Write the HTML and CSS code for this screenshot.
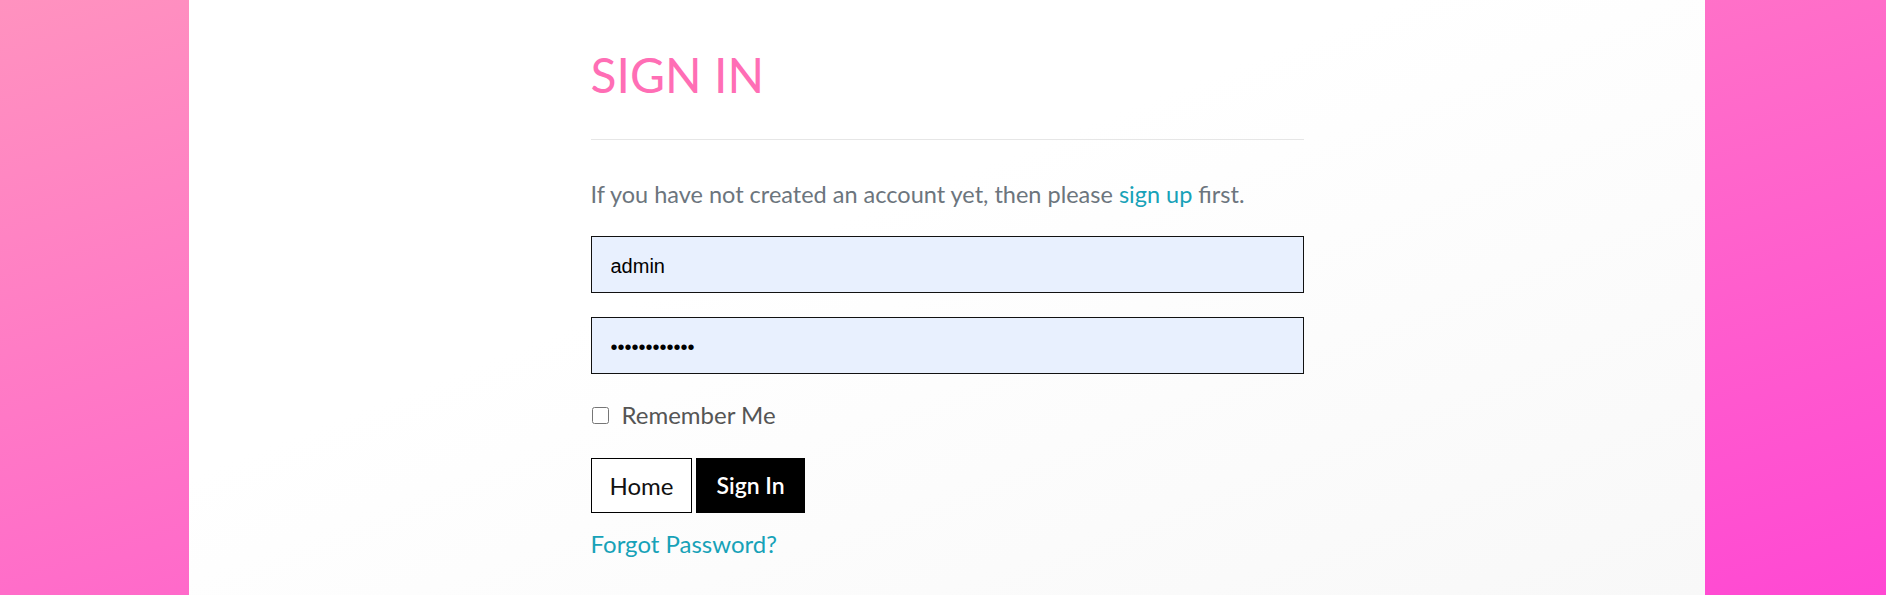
FILE: index.html
```html
<!DOCTYPE html>
<html lang="en">
<head>
<meta charset="utf-8">
<title>Sign In</title>
<link rel="stylesheet" href="styles.css">
</head>
<body>
<div class="page">
  <main class="panel">
    <div class="content">
      <h1 class="title">SIGN IN</h1>
      <hr class="rule">
      <p class="intro">If you have not created an account yet, then please <a href="#" class="link">sign up</a> first.</p>
      <form class="form">
        <input class="field" type="text" value="admin">
        <input class="field" type="password" value="adminadmin12">
        <label class="remember"><input type="checkbox" class="check"><span>Remember Me</span></label>
        <div class="actions">
          <a href="#" class="btn btn-outline">Home</a>
          <button type="button" class="btn btn-dark">Sign In</button>
        </div>
        <a href="#" class="link forgot">Forgot Password?</a>
      </form>
    </div>
  </main>
</div>
</body>
</html>
```
FILE: styles.css
```css
html, body {
  margin: 0;
  padding: 0;
  height: 100%;
}
body {
  font-family: Lato, "Liberation Sans", sans-serif;
  background: linear-gradient(to bottom right, #ff92bf, #ff48d3);
  overflow: hidden;
}
.page {
  height: 595px;
  display: flex;
}
.panel {
  margin-left: 189px;
  width: 1516px;
  height: 595px;
  background: linear-gradient(to bottom right, #ffffff 40%, #f8f8f8);
}
.content {
  width: 713px;
  margin: 0 auto;
  padding-top: 46px;
}
.title {
  margin: 0;
  font-size: 48px;
  font-weight: 400;
  line-height: 1.2;
  color: #ff6eb5;
}
.rule {
  margin: 35px 0 0;
  border: 0;
  border-top: 1px solid #e6e6e6;
  height: 0;
}
.intro {
  margin: 37px 0 0;
  font-size: 23.5px;
  line-height: 35px;
  color: #6c757d;
}
.link {
  color: #17a2b8;
  text-decoration: none;
}
.form {
  display: flex;
  flex-direction: column;
  align-items: flex-start;
}
.field {
  box-sizing: border-box;
  width: 100%;
  height: 57px;
  margin: 24px 0 0;
  padding: 4px 19px 0;
  border: 1px solid #111;
  border-radius: 0;
  background: #e8f0fe;
  font-family: "Liberation Sans", Arial, sans-serif;
  font-size: 20px;
  color: #000;
  outline: none;
}
.field + .field {
  margin-top: 24px;
}
.remember {
  display: flex;
  align-items: flex-start;
  margin-top: 23px;
  font-size: 24px;
  line-height: 36px;
  color: #555;
}
.check {
  width: 17px;
  height: 17px;
  margin: 10px 13px 0 1px;
}
.actions {
  display: flex;
  gap: 4px;
  margin-top: 25px;
}
.btn {
  box-sizing: border-box;
  height: 55px;
  padding: 0 18px;
  display: flex;
  align-items: center;
  font-family: Lato, "Liberation Sans", sans-serif;
  font-size: 24px;
  text-decoration: none;
  border: 1px solid #000;
  border-radius: 0;
}
.btn-outline {
  background: #fff;
  color: #111;
}
.btn-dark {
  background: #000;
  color: #fff;
  font-weight: 600;
  font-size: 23px;
  padding: 0 19px;
}
.forgot {
  margin-top: 13px;
  font-size: 24px;
  line-height: 36px;
}
```
